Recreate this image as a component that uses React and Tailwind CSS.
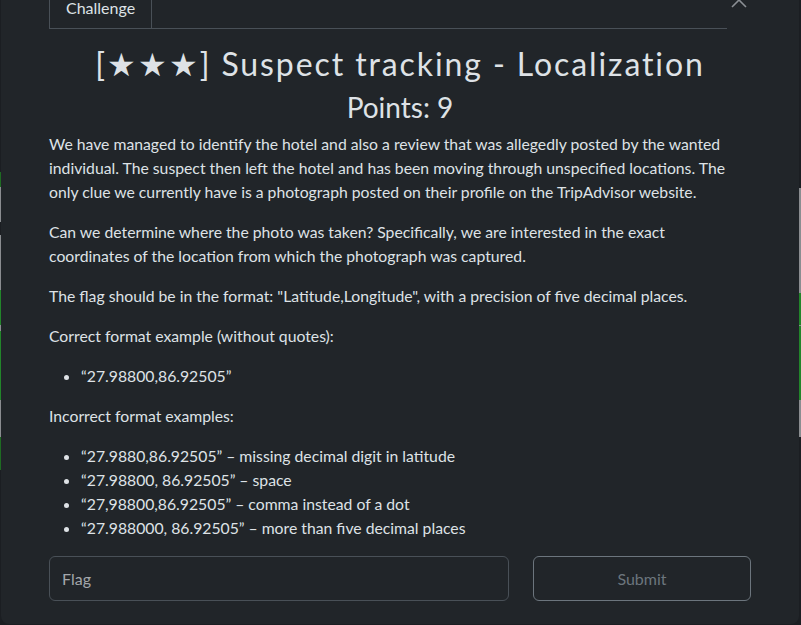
const leftStrips = [
  { top: 172, h: 15, c: "bg-[#1e6b22]" },
  { top: 187, h: 35, c: "bg-[#8a8d90]" },
  { top: 235, h: 55, c: "bg-[#8a8d90]" },
  { top: 290, h: 35, c: "bg-[#22852a]" },
  { top: 325, h: 6, c: "bg-[#8a8d90]" },
  { top: 331, h: 69, c: "bg-[#22852a]" },
  { top: 400, h: 37, c: "bg-[#8a8d90]" },
  { top: 437, h: 33, c: "bg-[#1e6b22]" },
];

const rightStrips = [
  { top: 188, h: 105, c: "bg-[#8a8d90]" },
  { top: 293, h: 32, c: "bg-[#22852a]" },
  { top: 325, h: 1, c: "bg-[#8a8d90]" },
  { top: 326, h: 74, c: "bg-[#22852a]" },
  { top: 400, h: 37, c: "bg-[#8a8d90]" },
];

const incorrect = [
  "\u201c27.9880,86.92505\u201d \u2013 missing decimal digit in latitude",
  "\u201c27.98800, 86.92505\u201d \u2013 space",
  "\u201c27,98800,86.92505\u201d \u2013 comma instead of a dot",
  "\u201c27.988000, 86.92505\u201d \u2013 more than five decimal places",
];

export default function App() {
  return (
    <div className="relative h-[625px] w-[801px] overflow-hidden bg-[#1b1e22] font-['Lato','Liberation_Sans',sans-serif] text-[#dee2e6]">
      {/* page behind the modal */}
      {leftStrips.map((s, i) => (
        <div
          key={"l" + i}
          className={"absolute left-0 w-[1px] " + s.c}
          style={{ top: s.top, height: s.h }}
        />
      ))}
      {rightStrips.map((s, i) => (
        <div
          key={"r" + i}
          className={"absolute right-0 w-[2px] " + s.c}
          style={{ top: s.top, height: s.h }}
        />
      ))}

      <div className="relative ml-[1px] h-[624px] w-[798px] rounded-b-lg bg-[#212529] px-12">
        <div className="flex items-start">
          <div className="-mt-[4px] flex w-[678px] border-b border-[#495057]">
            <div className="border-x border-[#495057] px-4 pb-2 text-[16px] leading-6">
              Challenge
            </div>
          </div>
          <button className="-mt-[8px] ml-[4px] text-[#8b8f94]">
            <svg width="16" height="16" viewBox="0 0 16 16" fill="none" stroke="currentColor" strokeWidth="1.6">
              <path d="M1 1 L15 15 M15 1 L1 15" />
            </svg>
          </button>
        </div>

        <h1 className="mt-[16px] text-center text-[32px] leading-[38px] tracking-[1.9px]">
          [★★★] Suspect tracking - Localization
        </h1>
        <h2 className="mt-[7px] text-center text-[28px] leading-[34px]">
          Points: 9
        </h2>

        <div className="mt-[8px] pr-[8px] text-[15.75px] leading-6">
          <p className="mb-4">
            We have managed to identify the hotel and also a review that was
            allegedly posted by the wanted individual. The suspect then left the
            hotel and has been moving through unspecified locations. The only
            clue we currently have is a photograph posted on their profile on
            the TripAdvisor website.
          </p>
          <p className="mb-4">
            Can we determine where the photo was taken? Specifically, we are
            interested in the exact coordinates of the location from which the
            photograph was captured.
          </p>
          <p className="mb-4">
            The flag should be in the format: "Latitude,Longitude", with a
            precision of five decimal places.
          </p>
          <p className="mb-4">Correct format example (without quotes):</p>
          <ul className="mb-4 list-disc pl-8">
            <li>{"\u201c27.98800,86.92505\u201d"}</li>
          </ul>
          <p className="mb-4">Incorrect format examples:</p>
          <ul className="mb-4 list-disc pl-8">
            {incorrect.map((t) => (
              <li key={t}>{t}</li>
            ))}
          </ul>
        </div>

        <div className="mt-[14px] flex gap-6">
          <input
            placeholder="Flag"
            className="h-[45px] w-[460px] rounded-md border border-[#495057] bg-transparent px-3 text-[16px] text-[#dee2e6] outline-none placeholder:text-[#a3a7ab]"
          />
          <button className="h-[45px] w-[218px] rounded-md border border-[#6c757d] text-[16px] text-[#6c757d]">
            Submit
          </button>
        </div>
      </div>
    </div>
  );
}
